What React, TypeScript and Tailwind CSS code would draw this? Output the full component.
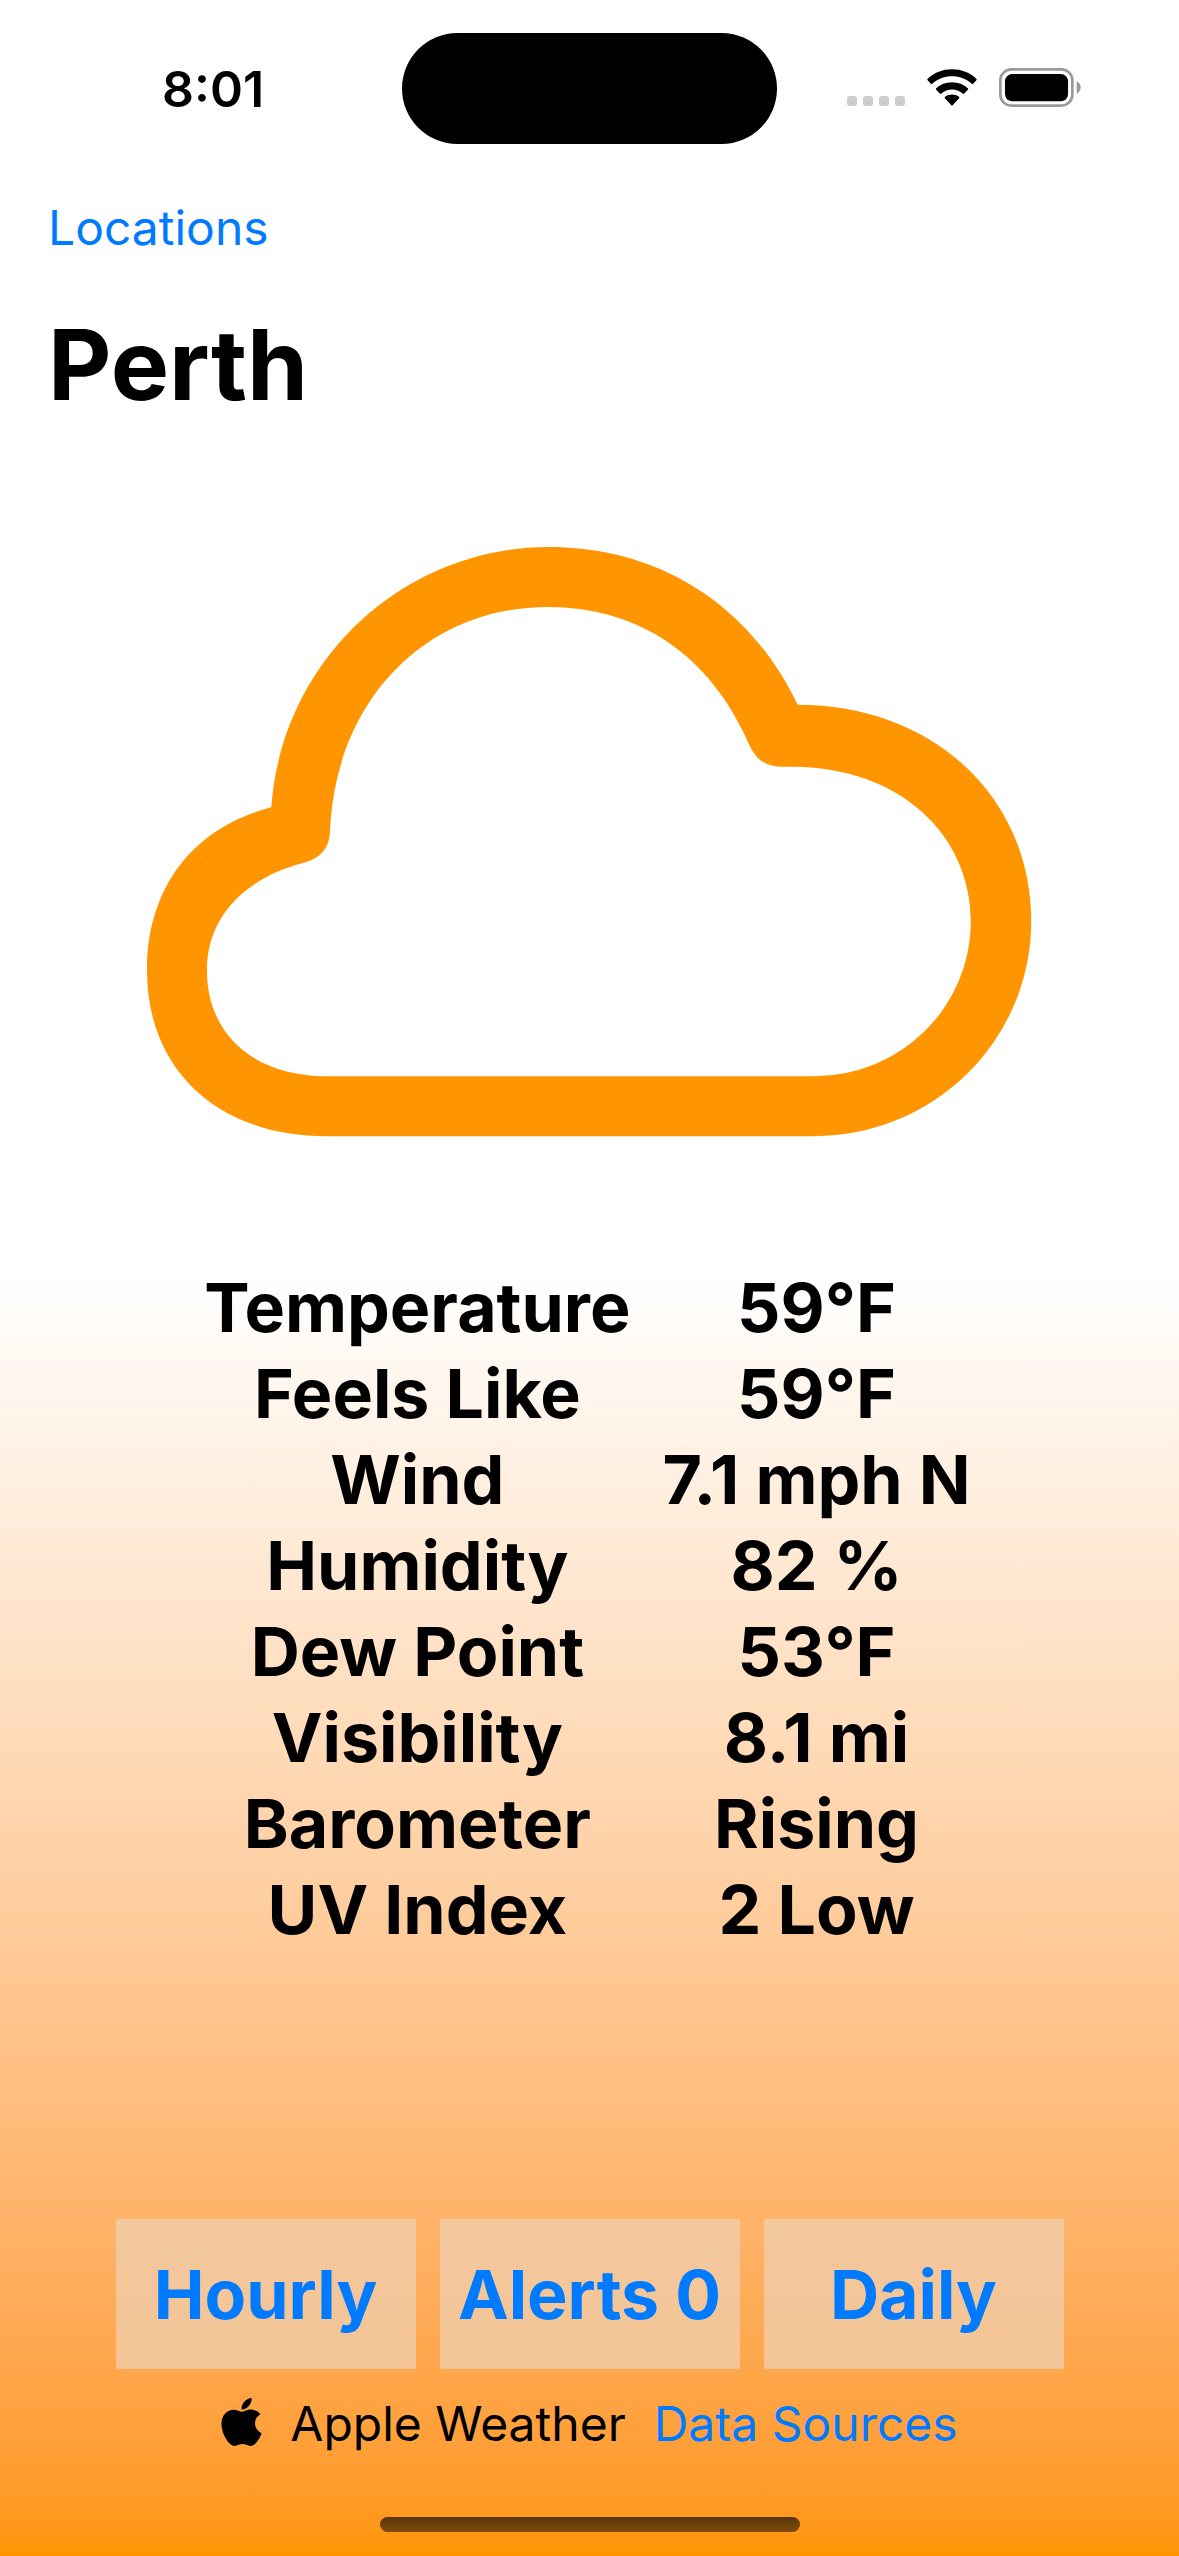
import { FaApple } from "react-icons/fa";

const conditions = [
  { label: "Temperature", value: "59°F" },
  { label: "Feels Like", value: "59°F" },
  { label: "Wind", value: "7.1 mph N" },
  { label: "Humidity", value: "82 %" },
  { label: "Dew Point", value: "53°F" },
  { label: "Visibility", value: "8.1 mi" },
  { label: "Barometer", value: "Rising" },
  { label: "UV Index", value: "2 Low" },
];

const actions = ["Hourly", "Alerts 0", "Daily"];

function WifiIcon() {
  return (
    <svg viewBox="319 56 150 112" className="h-[37px] w-[50px]" aria-hidden="true">
      <path d="M394 57C423 57 449 67 468 86q2 2 0 4L458 101q-2 2-4 0C437 86 417 78 394 78S351 86 334 101q-2 2-4 0L320 90q-2-2 0-4C340 67 365 57 394 57Z" />
      <path d="M394 96c19 0 35 7 48 18q3 2 0 5l-11 11q-2 2-5 0c-9-8-20-12-32-12s-23 4-32 12q-3 2-5 0l-11-11q-2-3 0-5c13-11 29-18 48-18Z" />
      <path d="M394 133c8 0 15 2 21 7q3 2 0 5l-19 21q-2 2-4 0l-19-21q-3-3 0-5c6-5 13-7 21-7Z" />
    </svg>
  );
}

function BatteryIcon() {
  return (
    <svg viewBox="537 54 247 117" className="h-[39px] w-[82px]" aria-hidden="true">
      <rect x="541" y="58" width="217" height="109" rx="33" fill="none" stroke="#999" strokeWidth="8" />
      <rect x="555" y="72" width="190" height="82" rx="22" />
      <path d="M771 94q12 6 12 18.5T771 131Z" fill="#999" />
    </svg>
  );
}

function StatusBar() {
  return (
    <div className="grid grid-cols-[1fr_auto_1fr] items-center pt-[33px]">
      <div className="pl-6 text-center text-[50px] leading-[60px] font-semibold">8:01</div>
      <div className="h-[111px] w-[375px] rounded-full bg-black" />
      <div className="flex items-center justify-end gap-[22px] pr-[98px] pb-[2px]">
        <div className="flex h-[37px] items-end gap-[6px]">
          {[0, 1, 2, 3].map((dot) => (
            <span key={dot} className="size-[10px] rounded-[3px] bg-[#cccccc]" />
          ))}
        </div>
        <WifiIcon />
        <BatteryIcon />
      </div>
    </div>
  );
}

function CloudIcon() {
  return (
    <svg viewBox="147 547 885.5 590.5" className="mx-auto mt-[122px] w-3/4" role="img" aria-label="Cloudy">
      <path
        fill="#ff9500"
        fillRule="evenodd"
        d="M327 1137H815A217.5 215 0 0 0 1032.5 922C1032.5 797 934 705 798.500 705C751 605 660 547 549 547C404 547 282 660 271.500 807.700C192 828 147 889 147 971C147 1070 217 1137 327 1137ZM327 1077H815A157 155 0 0 0 972 922C972 836 902 768 795 767L782 767C764 766 757 759 750 745L745 734C705 650 634 607 549 607C430 607 341 695 331 820L330 835C328 852 318 860 301 864C241 881 207 920 207 971C207 1034 253 1077 327 1077Z"
      />
    </svg>
  );
}

export default function App() {
  return (
    <div className="flex min-h-screen flex-col bg-linear-to-b/oklab from-white from-50% to-[#ff9500] font-['Inter',sans-serif] text-black">
      <StatusBar />

      <nav className="mt-[54px] px-12">
        <a href="#locations" className="block text-[48px] leading-[60px] text-[#007aff]">
          Locations
        </a>
      </nav>

      <main className="flex flex-1 flex-col">
        <h1 className="mt-[47px] px-12 text-[98px] leading-[120px] font-bold">Perth</h1>

        <CloudIcon />

        <table className="mx-auto mt-[127px] text-center text-[68px] leading-[86px] font-bold">
          <tbody>
            {conditions.map(({ label, value }) => (
              <tr key={label}>
                <th scope="row" className="p-0 pr-8 text-center font-bold">
                  {label}
                </th>
                <td className="p-0 pr-1">{value}</td>
              </tr>
            ))}
          </tbody>
        </table>

        <div className="mt-auto flex justify-center gap-6">
          {actions.map((label) => (
            <button
              key={label}
              type="button"
              className="h-[150px] w-[300px] bg-[#eed1b5]/70 text-[68px] leading-[86px] font-bold whitespace-nowrap text-[#007aff]"
            >
              {label}
            </button>
          ))}
        </div>
      </main>

      <footer className="mt-[25px] pb-6">
        <div className="flex items-center justify-center gap-7 text-[48px] leading-[60px]">
          <span className="flex items-center gap-7">
            <FaApple className="mb-1 h-[56px] w-[41px]" aria-hidden="true" />
            Apple Weather
          </span>
          <a href="#data-sources" className="text-[#007aff]">
            Data Sources
          </a>
        </div>
        <div className="mx-auto mt-[63px] h-[15px] w-[420px] rounded-full bg-linear-to-b from-black/65 to-black/50" />
      </footer>
    </div>
  );
}
